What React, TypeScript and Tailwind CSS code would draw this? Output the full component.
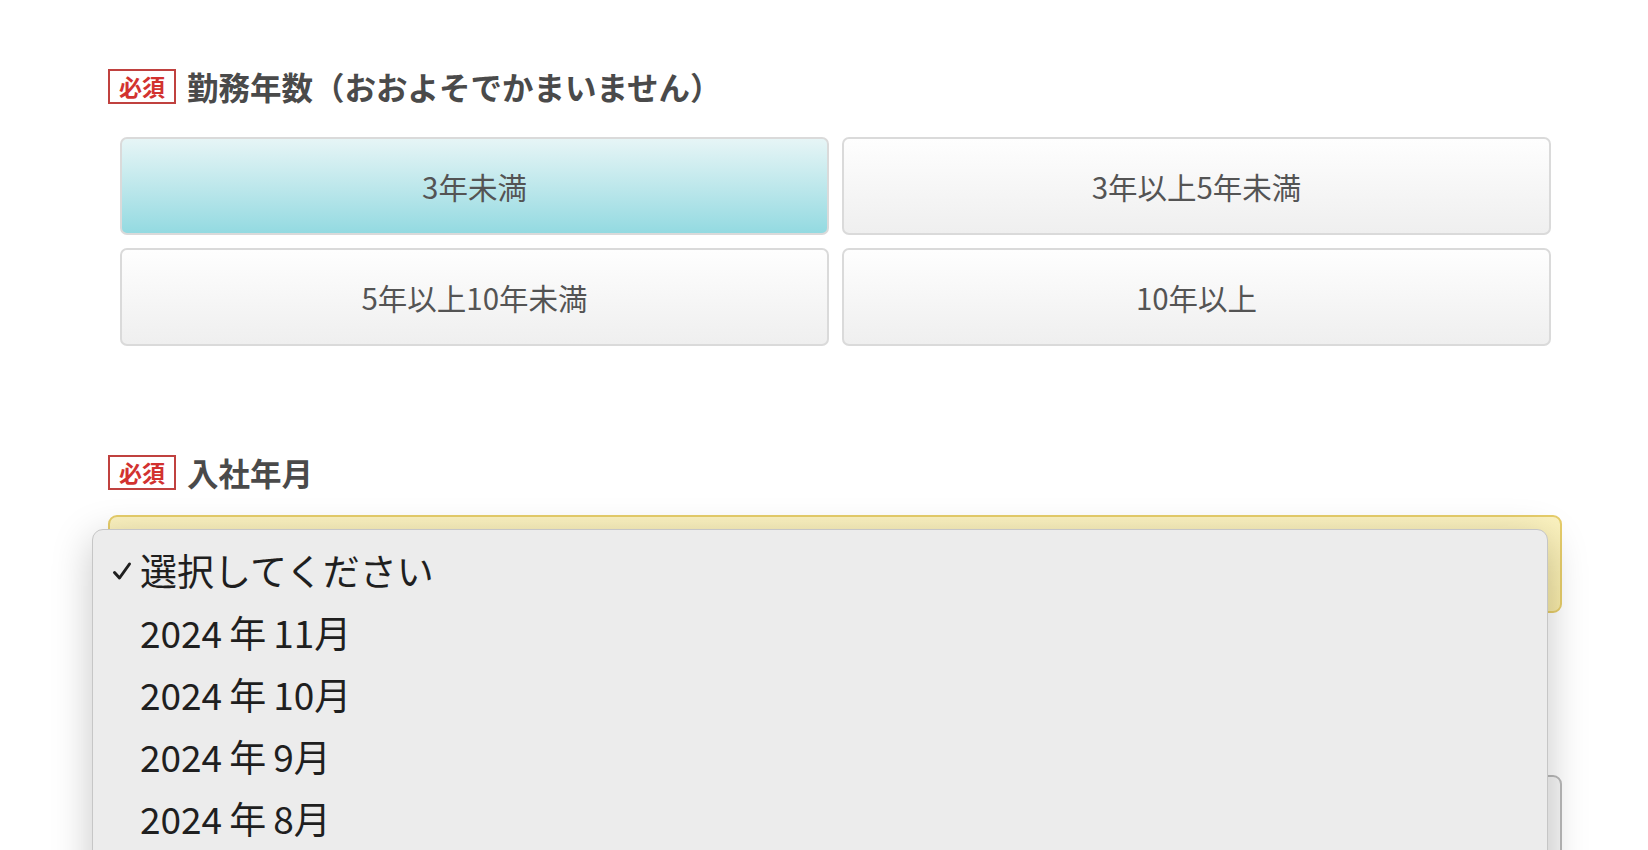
import React from 'react';

const FONT = "font-['Noto_Sans_CJK_JP','Noto_Sans',sans-serif]";

const periods = ['3年未満', '3年以上5年未満', '5年以上10年未満', '10年以上'];
const months = [
  ['2024', '11'],
  ['2024', '10'],
  ['2024', '9'],
  ['2024', '8'],
];

const Required = () => (
  <span className="flex h-[35px] w-[68px] items-center justify-center border-2 border-[#c0413f] text-[23px] font-bold leading-none text-[#d2322f]">
    必須
  </span>
);

const Label = ({ text }: { text: string }) => (
  <div className="flex h-[35px] items-center gap-[11px]">
    <Required />
    <span className="text-[31.5px] font-bold leading-none text-[#4a4a4a]">{text}</span>
  </div>
);

const Check = () => (
  <svg width="20" height="20" viewBox="0 0 20 20" className="shrink-0">
    <path d="M2.5 11.5 L7.5 17 L17.5 3" fill="none" stroke="#1f1f1f" strokeWidth="3" strokeLinecap="round" strokeLinejoin="round" />
  </svg>
);

export default function App() {
  const selected = 0;

  return (
    <div className={`${FONT} h-[850px] overflow-hidden bg-white pl-[108px] pr-[86px] pt-[69px]`}>
      {/* 勤務年数 */}
      <Label text="勤務年数（おおよそでかまいません）" />
      <div className="mt-[33px] grid grid-cols-2 gap-[13px] pl-[12px] pr-[11px]">
        {periods.map((p, i) => (
          <button
            key={p}
            className={`flex h-[98px] items-center justify-center rounded-[7px] border-2 border-[#dadada] text-[29.5px] text-[#545454] ${
              i === selected
                ? 'bg-gradient-to-b from-[#e6f5f6] to-[#93dae1]'
                : 'bg-gradient-to-b from-[#fefefe] to-[#efefef]'
            }`}
          >
            {p}
          </button>
        ))}
      </div>

      {/* 入社年月 */}
      <div className="mt-[109px]">
        <Label text="入社年月" />
      </div>
      <div className="relative mt-[25px]">
        <div className="h-[98px] rounded-[9px] border-2 border-[#e6cd6a] bg-gradient-to-b from-[#fbf2c0] to-[#f7eaa8]" />

        {/* open select list */}
        <div className="absolute left-[-16px] top-[14px] z-10 h-[420px] w-[1456px] rounded-[11px] border border-[#c6c6c6] bg-[#ececec] pt-[9px] shadow-[0_10px_40px_rgba(0,0,0,0.22)]">
          <div className="flex h-[62px] items-center text-[37px] leading-none text-[#1f1f1f]">
            <span className="flex w-[47px] justify-end pr-[8px] pt-[2px]">
              <Check />
            </span>
            選択してください
          </div>
          {months.map(([y, m]) => (
            <div key={y + m} className="flex h-[62px] items-center pl-[47px] text-[37px] leading-none text-[#1f1f1f]">
              {y}
              <span className="mx-[7px]">年</span>
              {m}月
            </div>
          ))}
        </div>
      </div>

      <div className="mt-[162px] h-[98px] rounded-[9px] border-2 border-[#b9b9b9] bg-[#f6f6f6]" />
    </div>
  );
}
